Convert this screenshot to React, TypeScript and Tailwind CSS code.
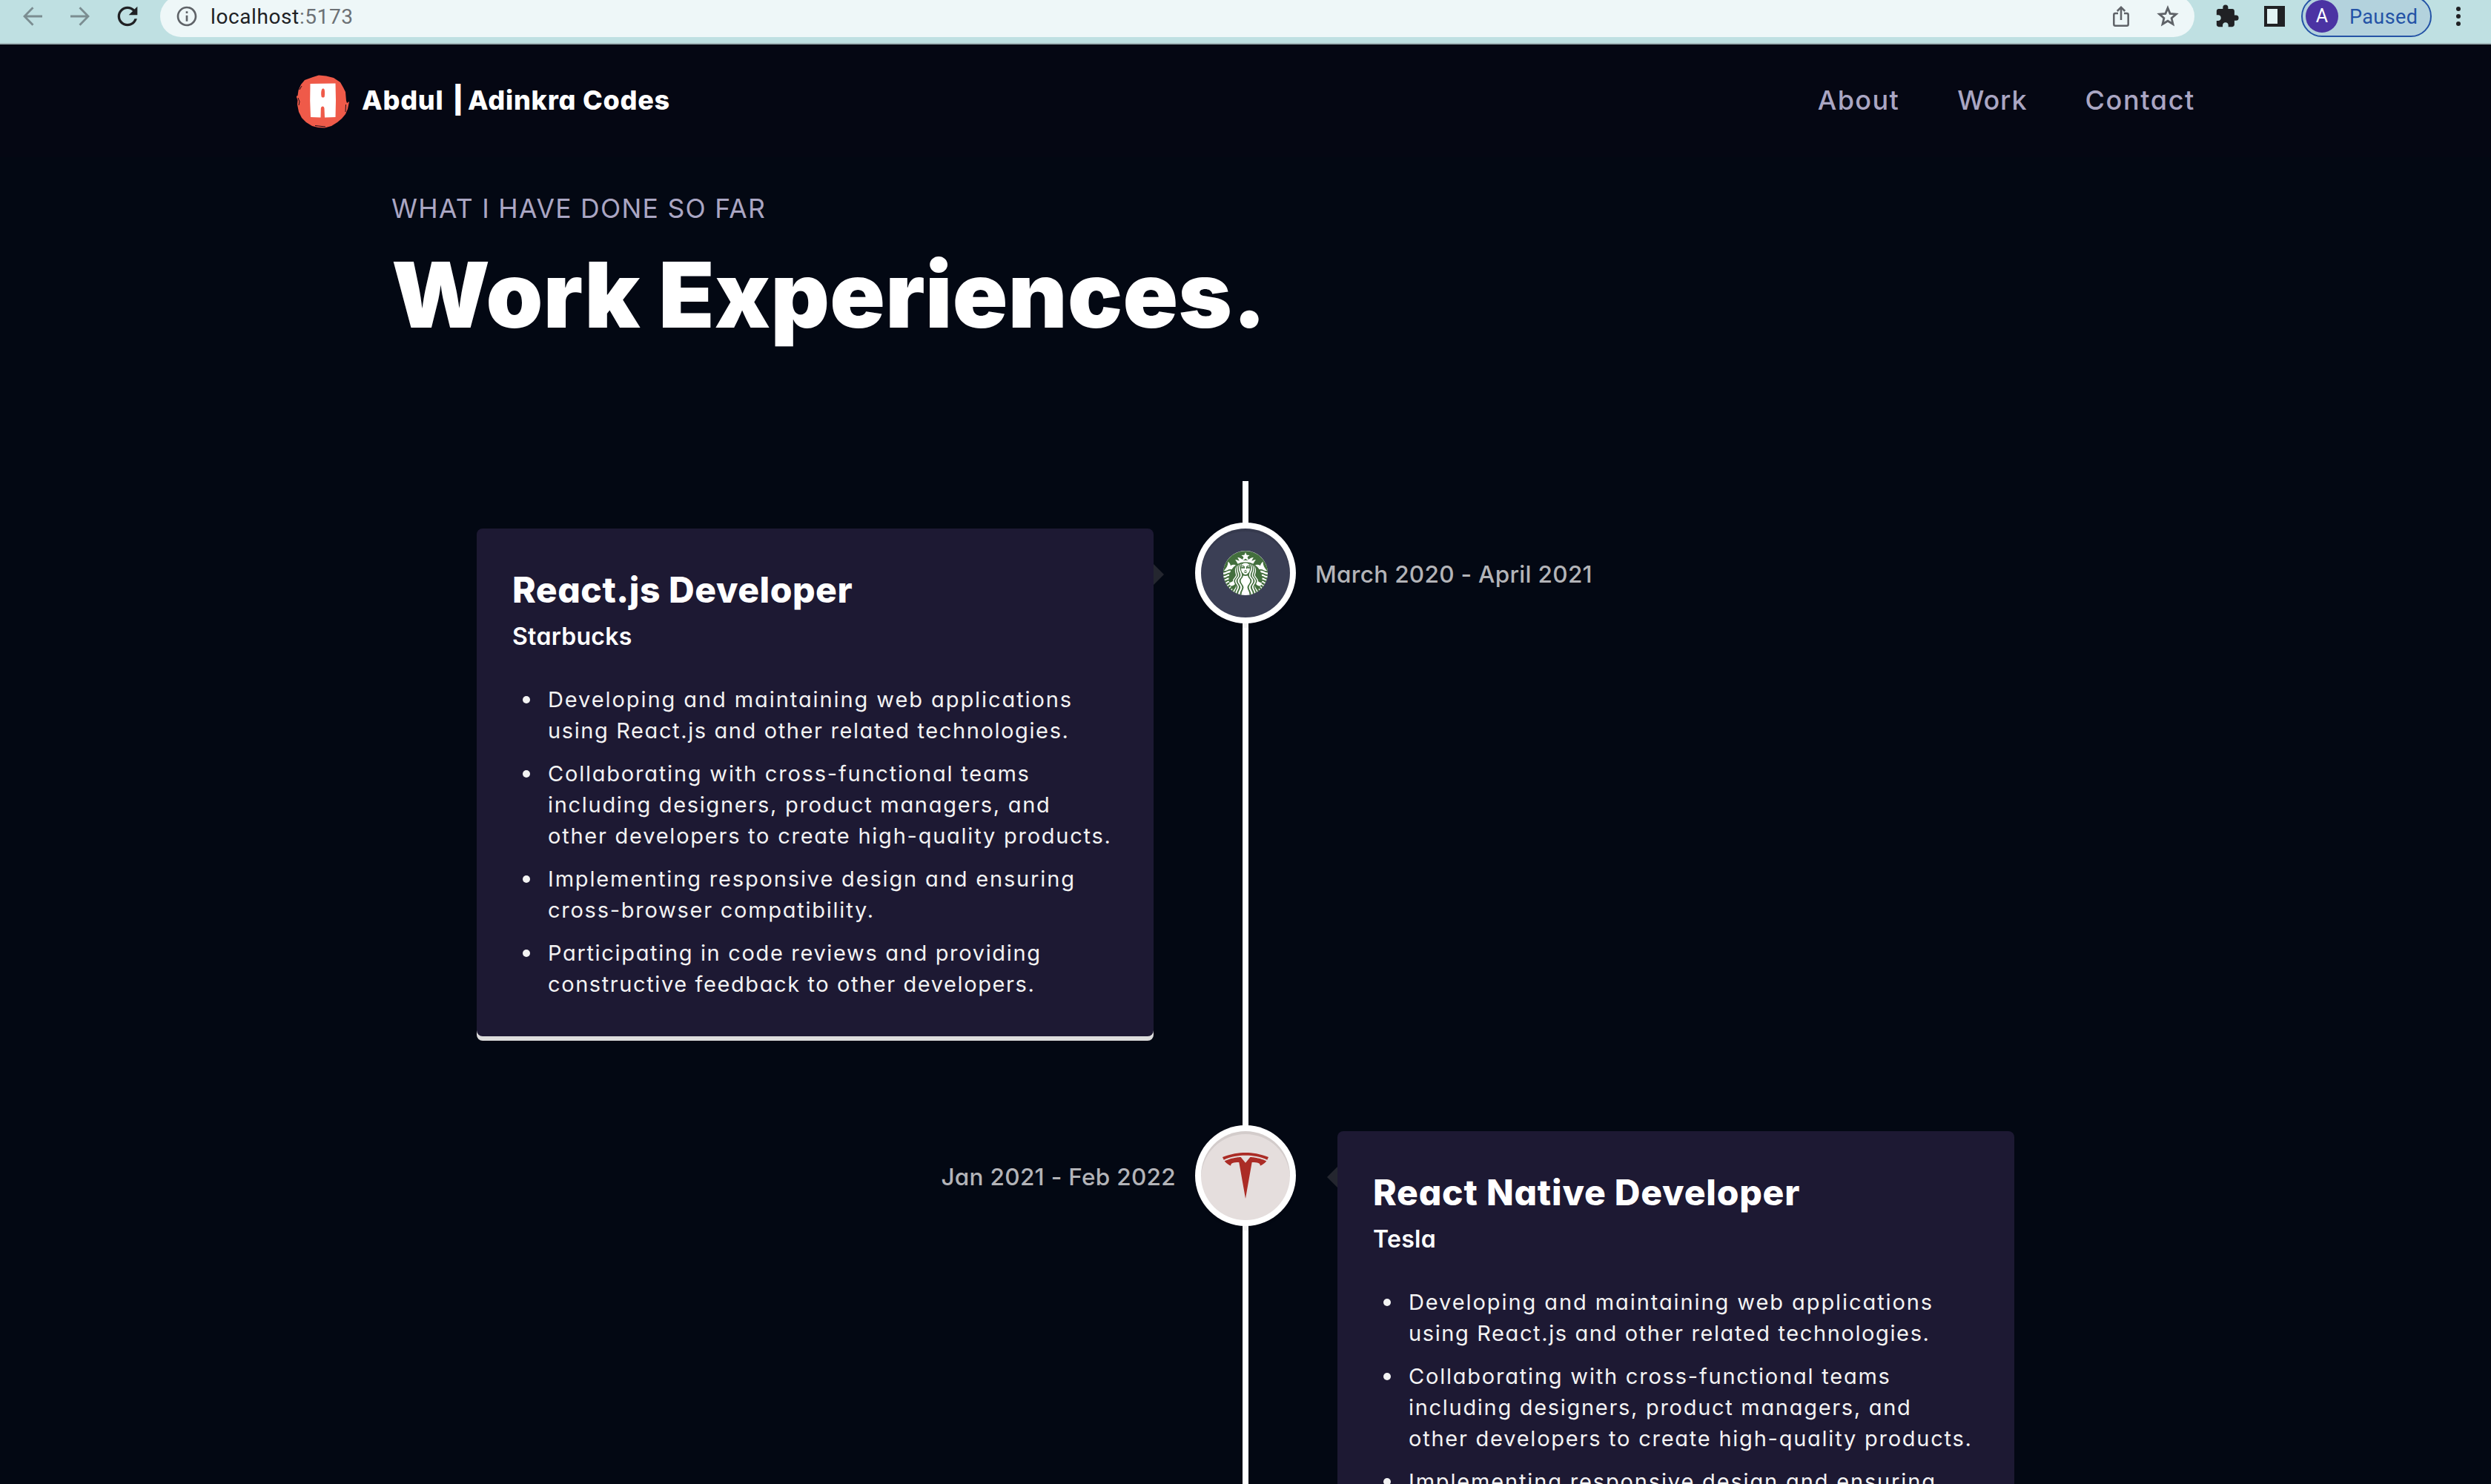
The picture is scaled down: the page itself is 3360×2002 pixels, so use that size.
import type { ReactNode } from "react";
import { MdExtension, MdInfoOutline, MdRefresh } from "react-icons/md";
import { SiStarbucks, SiTesla } from "react-icons/si";

type Line = { text: string; tracking: string };

const points: Line[][] = [
  [
    { text: "Developing and maintaining web applications", tracking: "tracking-[1.92px]" },
    { text: "using React.js and other related technologies.", tracking: "tracking-[1.61px]" },
  ],
  [
    { text: "Collaborating with cross-functional teams", tracking: "tracking-[1.79px]" },
    { text: "including designers, product managers, and", tracking: "tracking-[1.7px]" },
    { text: "other developers to create high-quality products.", tracking: "tracking-[1.76px]" },
  ],
  [
    { text: "Implementing responsive design and ensuring", tracking: "tracking-[1.84px]" },
    { text: "cross-browser compatibility.", tracking: "tracking-[1.74px]" },
  ],
  [
    { text: "Participating in code reviews and providing", tracking: "tracking-[1.66px]" },
    { text: "constructive feedback to other developers.", tracking: "tracking-[1.59px]" },
  ],
];

function ArrowIcon({ className }: { className: string }) {
  return (
    <svg className={className} width="26" height="26" viewBox="0 0 26 26" fill="none" stroke="#7b8d91" strokeWidth="2.8">
      <path d="M26 13H3M13.5 1.2L2 13l11.5 11.8" />
    </svg>
  );
}

function ShareIcon() {
  return (
    <svg width="22" height="28" viewBox="0 0 22 28" fill="none" stroke="#5f6368" strokeWidth="2.5">
      <path d="M7 10H3.3a2 2 0 0 0-2 2v12.7a2 2 0 0 0 2 2h15.4a2 2 0 0 0 2-2V12a2 2 0 0 0-2-2H15" />
      <path d="M11 19V2.2M5.8 7L11 1.8 16.2 7" />
    </svg>
  );
}

function StarIcon() {
  return (
    <svg className="ml-[37px]" width="30" height="30" viewBox="0 0 30 30" fill="none" stroke="#5f6368" strokeWidth="2.8">
      <path d="M15 3.800l3.100 7.600 8.200.7-6.200 5.400 1.900 8L15 21.200l-7 4.300 1.900-8-6.200-5.400 8.200-.7z" />
    </svg>
  );
}

function BrowserBar() {
  return (
    <div className="flex h-[60px] shrink-0 items-start overflow-hidden border-b-2 border-[#9fb4b8] bg-[#bfe0e2] font-['Roboto',sans-serif]">
      <div className="flex h-11 w-[216px] items-center pl-[31px]">
        <ArrowIcon className="" />
        <ArrowIcon className="ml-[38px] rotate-180" />
        <MdRefresh className="ml-[31px] size-10 text-[#202124]" />
      </div>
      <div className="-mt-1.5 flex h-14 w-[2744px] items-center rounded-full bg-[#eef7f8] pr-[21px] pl-[20px]">
        <MdInfoOutline className="size-8 text-[#5f6368]" />
        <p className="mt-0.5 ml-[16px] text-[28px] leading-8 tracking-[0.6px] text-[#202124]">
          localhost<span className="text-[#6c7175]">:5173</span>
        </p>
        <div className="ml-auto flex items-center">
          <ShareIcon />
          <StarIcon />
        </div>
      </div>
      <div className="flex h-11 items-center pl-[27px]">
        <MdExtension className="size-[34px] text-[#202124]" />
        <div className="ml-[33px] flex size-7 bg-[#202124] p-1">
          <div className="w-3.5 bg-[#e2f3f4]" />
        </div>
      </div>
      <div className="-mt-1.5 ml-[22px] flex h-14 w-44 items-center rounded-full border-2 border-[#2453a6] bg-[#b3d2dd] pl-1">
        <div className="flex size-11 items-center justify-center rounded-full bg-[#4b33a3] text-[25px] text-white">A</div>
        <span className="mt-0.5 ml-[15px] text-[27px] leading-8 tracking-[0.4px] text-[#2453a6]">Paused</span>
      </div>
      <div className="ml-[33px] flex h-11 flex-col items-center justify-center gap-1">
        <i className="size-1.5 rounded-full bg-[#202124]" />
        <i className="size-1.5 rounded-full bg-[#202124]" />
        <i className="size-1.5 rounded-full bg-[#202124]" />
      </div>
    </div>
  );
}

function Logo() {
  return (
    <svg className="mt-0.5" width="72" height="72" viewBox="0 0 72 72">
      <path
        fill="#ef5a49"
        d="M22 3l8-2.500 10 1 10 2.500 9 6 4 7 3 6 1 12 1 3 3-2-2 10-3 7-5 6-6 5-8 5-9 2.500-9-.5-8-2-8-5-6-6-4-8-2-10 .5-6-2-5 2-1 1-7 3.500-8 5-6z"
      />
      <path fill="none" stroke="#050713" strokeWidth="0.9" d="M2 31l2 5-1 5M4 20l3-5M66.500 40l-.5 10M25 68.500l14 1.500" />
      <path
        fill="#fff"
        d="M18.500 12l34-.5.5 23-.5 22.500-14.500.500-.5-12c0-4-4.500-4-4.700 0l-.3 12-13.500-.500-.8-22zM34 20c-1 2-1 6-.5 9 .5 2 4 2 4.300 0 .4-3 .3-6 0-8.500-.5-2.500-3-2.500-3.800-.5z"
      />
    </svg>
  );
}

function Navbar() {
  return (
    <nav className="flex h-[152px] shrink-0 items-center justify-between bg-[#050713] px-[400px]">
      <div className="flex items-center gap-4">
        <Logo />
        <p className="-mt-[3px] flex text-[36px] leading-[54px] font-extrabold text-white">
          <span className="tracking-[0.75px]">Abdul</span>
          <span className="ml-[12px] font-black">|</span>
          <span className="ml-[6px] tracking-[0.75px]">Adinkra Codes</span>
        </p>
      </div>
      <div className="-mt-[3px] flex gap-[78px] text-[36px] leading-[54px] font-medium text-[#aaa6c3]">
        <span className="tracking-[1.4px]">About</span>
        <span className="tracking-[0.9px]">Work</span>
        <span className="-mr-px tracking-[1.65px]">Contact</span>
      </div>
    </nav>
  );
}

type ItemProps = {
  title: string;
  titleTracking: string;
  company: string;
  date: string;
  icon: ReactNode;
  iconBg: string;
  flip?: boolean;
};

function TimelineItem({ title, titleTracking, company, date, icon, iconBg, flip }: ItemProps) {
  return (
    <article className={flip ? "flex flex-row-reverse items-start" : "flex items-start"}>
      <div className="relative w-[913px] shrink-0 rounded-lg bg-[#1d1933] px-12 pt-[47px] pb-[49px] shadow-[0_6px_0_#dddddd]">
        <div
          className={
            flip
              ? "absolute top-12 right-full border-y-[14px] border-r-[14px] border-y-transparent border-r-[#24262f]"
              : "absolute top-12 left-full border-y-[14px] border-l-[14px] border-y-transparent border-l-[#24262f]"
          }
        />
        <h3 className={`text-[48px] leading-[72px] font-extrabold text-white ${titleTracking}`}>{title}</h3>
        <p className="mt-[3px] text-[32px] leading-[48px] font-semibold tracking-[0.3px] text-white">{company}</p>
        <ul className="mt-10 flex flex-col gap-4 text-[29px] leading-[42px] text-[#f3f3f3]">
          {points.map((lines) => (
            <li key={lines[0].text} className="flex">
              <i className="mt-4 mr-6 ml-[14px] size-2.5 shrink-0 rounded-full bg-[#f3f3f3]" />
              <div>
                {lines.map((line) => (
                  <div key={line.text} className={`whitespace-nowrap ${line.tracking}`}>
                    {line.text}
                  </div>
                ))}
              </div>
            </li>
          ))}
        </ul>
      </div>
      <div
        className={`relative mx-16 flex size-[120px] shrink-0 items-center justify-center rounded-full shadow-[0_0_0_8px_#fff,inset_0_4px_0_rgba(0,0,0,0.08),0_6px_0_8px_rgba(0,0,0,0.05)] ${iconBg}`}
      >
        {icon}
      </div>
      <time className="mx-[-30px] mt-[38px] text-[31.5px] leading-[48px] font-medium tracking-[0.3px] text-[#b3b4b8]">{date}</time>
    </article>
  );
}

export default function App() {
  return (
    <div className="flex h-[2002px] w-[3360px] flex-col overflow-hidden bg-[#030813] font-['Inter',sans-serif] [font-feature-settings:'cv11']">
      <BrowserBar />
      <Navbar />
      <header className="px-[528px] pt-[43px]">
        <p className="text-[35.5px] leading-[54px] tracking-[1.3px] text-[#aaa6c3]">WHAT I HAVE DONE SO FAR</p>
        <h2 className="mt-[14px] text-[123px] leading-[150px] font-black tracking-[0.4px] text-white">Work Experiences.</h2>
      </header>
      <section className="relative mt-[176px] flex h-[1353px] shrink-0 flex-col gap-32 px-[643px] pt-16">
        <div className="absolute top-0 left-[1676px] h-full w-2 bg-white" />
        <TimelineItem
          title="React.js Developer"
          titleTracking="tracking-[0.55px]"
          company="Starbucks"
          date="March 2020 - April 2021"
          iconBg="bg-[#3b3f55]"
          icon={
            <div className="flex size-[60px] items-center justify-center rounded-full bg-white">
              <SiStarbucks className="size-[60px] text-[#436f3d]" />
            </div>
          }
        />
        <TimelineItem
          flip
          title="React Native Developer"
          titleTracking="tracking-[0.8px]"
          company="Tesla"
          date="Jan 2021 - Feb 2022"
          iconBg="bg-[#e5dedd]"
          icon={<SiTesla className="size-[62px] text-[#ab2c26]" />}
        />
      </section>
    </div>
  );
}
